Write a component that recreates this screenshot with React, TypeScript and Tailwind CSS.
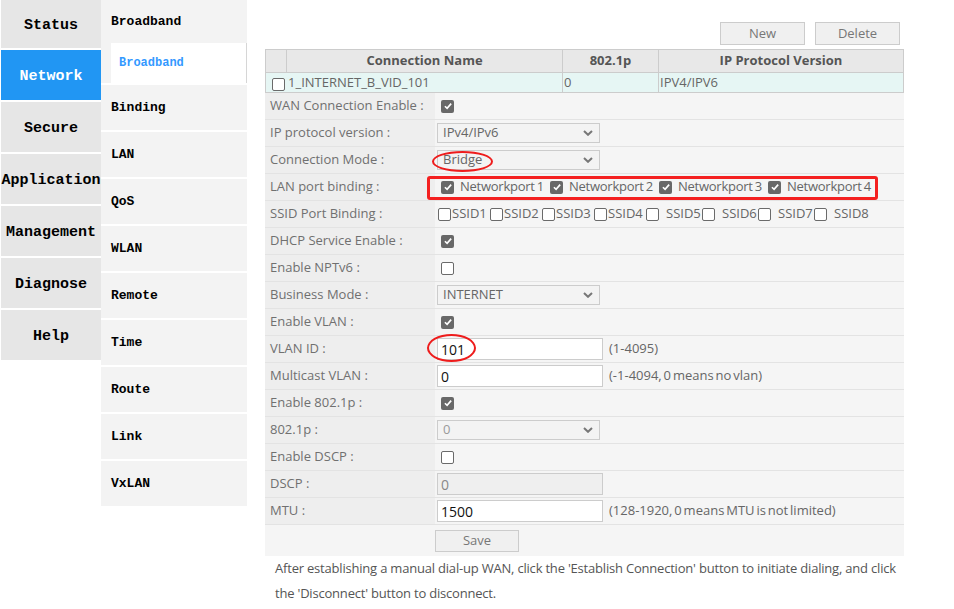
import React from 'react';

const mainMenu = ['Status', 'Network', 'Secure', 'Application', 'Management', 'Diagnose', 'Help'];
const subMenu = ['Binding', 'LAN', 'QoS', 'WLAN', 'Remote', 'Time', 'Route', 'Link', 'VxLAN'];

function Box({ on }: { on?: boolean }) {
  if (on) {
    return (
      <span className="inline-flex h-[13px] w-[13px] shrink-0 items-center justify-center rounded-[2px] bg-[#686868]">
        <svg viewBox="0 0 12 12" className="h-[10px] w-[10px]">
          <path d="M2.3 6.3 4.9 8.8 9.8 3.2" fill="none" stroke="#fff" strokeWidth="2" />
        </svg>
      </span>
    );
  }
  return <span className="inline-block h-[13px] w-[13px] shrink-0 rounded-[2px] border border-[#6a6a6a] bg-white" />;
}

function Select({ value, dim }: { value: string; dim?: boolean }) {
  return (
    <div className="flex h-[20px] w-[163px] items-center justify-between border border-[#cccccc] bg-[#f3f3f3] pl-[5px] pr-[6px]">
      <span className={dim ? 'text-[#9a9a9a]' : 'text-[#666]'}>{value}</span>
      <svg viewBox="0 0 10 6" className="h-[6px] w-[10px]">
        <path d="M1 1 5 4.8 9 1" fill="none" stroke="#777" strokeWidth="2" />
      </svg>
    </div>
  );
}

function Input({ value, disabled }: { value: string; disabled?: boolean }) {
  return (
    <div
      className={`flex h-[22px] w-[166px] items-center border border-[#cccccc] pl-[3px] text-[14px] ${
        disabled ? 'bg-[#efefef] text-[#888]' : 'bg-white text-[#111]'
      }`}
    >
      {value}
    </div>
  );
}

function Hint({ children }: { children: React.ReactNode }) {
  return <span className="ml-[6px] text-[#666] [word-spacing:-1.5px]">{children}</span>;
}

function Row({ label, children, pl = 'pl-[2px]' }: { label: string; children: React.ReactNode; pl?: string }) {
  return (
    <div className="flex h-[27px] border-b border-[#e3e3e3]">
      <div className="flex w-[170px] items-center bg-[#eeeeee] pl-[5px] text-[#707070]">{label}</div>
      <div className={`relative flex flex-1 items-center bg-[#f5f5f5] ${pl}`}>{children}</div>
    </div>
  );
}

export default function App() {
  return (
    <div className="flex h-[609px] w-[954px] overflow-hidden bg-white font-['Open_Sans',sans-serif] text-[13px]">
      {/* main menu */}
      <div className="ml-[1px] flex w-[100px] flex-col gap-[2px] font-['Liberation_Mono',monospace] text-[15px] font-bold">
        {mainMenu.map((m, i) => (
          <div
            key={m}
            className={`flex items-center justify-center pt-[4px] ${i === 0 ? 'h-[48px]' : 'h-[50px]'} ${
              m === 'Network' ? 'bg-[#2196f3] text-white' : 'bg-[#e6e6e6] text-black'
            }`}
          >
            {m}
          </div>
        ))}
      </div>

      {/* sub menu */}
      <div className="flex w-[146px] flex-col gap-[2px] font-['Liberation_Mono',monospace] font-bold">
        <div className="bg-[#f3f3f3]">
          <div className="flex h-[43px] items-center pl-[10px] text-[13px] text-black">Broadband</div>
          <div className="ml-[10px] flex h-[40px] items-center border-r border-[#d6d6d6] bg-white pl-[8px] text-[12px] text-[#3399ff]">
            Broadband
          </div>
        </div>
        {subMenu.map((s) => (
          <div key={s} className="flex h-[45px] items-center bg-[#f3f3f3] pl-[10px] pt-[1px] text-[13px] text-black">
            {s}
          </div>
        ))}
      </div>

      {/* content */}
      <div className="ml-[18px] w-[639px] pt-[22px]">
        <div className="flex h-[23px] justify-end gap-[10px] pr-[4px]">
          <button className="h-[23px] w-[85px] border border-[#cccccc] bg-[#f0f0f0] text-[13px] text-[#777]">New</button>
          <button className="h-[23px] w-[85px] border border-[#cccccc] bg-[#f0f0f0] text-[13px] text-[#777]">Delete</button>
        </div>

        <div className="mt-[4px] border border-[#cccccc]">
          <div className="flex h-[22px] bg-[#e8e8e8] font-bold text-[#555]">
            <div className="w-[21px] border-r border-[#cccccc]" />
            <div className="flex w-[276px] items-center justify-center border-r border-[#cccccc]">Connection Name</div>
            <div className="flex w-[96px] items-center justify-center border-r border-[#cccccc]">802.1p</div>
            <div className="flex flex-1 items-center justify-center">IP Protocol Version</div>
          </div>
          <div className="flex h-[20px] border-t border-[#cccccc] bg-[#e6f6f4] text-[#666]">
            <div className="flex w-[21px] items-end justify-center pb-[1px] pl-[3px]">
              <Box />
            </div>
            <div className="flex w-[276px] items-center border-r border-[#cccccc] pl-[1px]">1_INTERNET_B_VID_101</div>
            <div className="flex w-[96px] items-center border-r border-[#cccccc] pl-[1px]">0</div>
            <div className="flex flex-1 items-center pl-[1px]">IPV4/IPV6</div>
          </div>
        </div>

        <Row label="WAN Connection Enable :" pl="pl-[6px]">
          <Box on />
        </Row>
        <Row label="IP protocol version :">
          <Select value="IPv4/IPv6" />
        </Row>
        <Row label="Connection Mode :">
          <Select value="Bridge" />
          <span className="absolute left-[-3px] top-[4px] h-[21px] w-[61px] rounded-[50%] border-2 border-[#ee1c1c]" />
        </Row>
        <Row label="LAN port binding :" pl="pl-[6px]">
          {[1, 2, 3, 4].map((n) => (
            <div key={n} className="flex w-[109px] items-center">
              <Box on />
              <span className="ml-[6px] tracking-[-0.25px] text-[#666] [word-spacing:-1px]">Networkport {n}</span>
            </div>
          ))}
          <span className="absolute left-[-8px] top-[2px] h-[24px] w-[451px] rounded-[3px] border-[3px] border-[#f42020]" />
        </Row>
        <Row label="SSID Port Binding :" pl="pl-[3px]">
          {[1, 2, 3, 4, 5, 6, 7, 8].map((n) => (
            <div key={n} className={`flex items-center ${n <= 4 ? 'w-[52px]' : 'w-[56px]'}`}>
              <Box />
              <span className={`${n <= 4 ? 'ml-[1px]' : 'ml-[7px]'} text-[#666]`}>SSID{n}</span>
            </div>
          ))}
        </Row>
        <Row label="DHCP Service Enable :" pl="pl-[6px]">
          <Box on />
        </Row>
        <Row label="Enable NPTv6 :" pl="pl-[6px]">
          <Box />
        </Row>
        <Row label="Business Mode :">
          <Select value="INTERNET" />
        </Row>
        <Row label="Enable VLAN :" pl="pl-[6px]">
          <Box on />
        </Row>
        <Row label="VLAN ID :">
          <Input value="101" />
          <Hint>(1-4095)</Hint>
          <span className="absolute left-[-8px] top-[-2px] h-[28px] w-[49px] rounded-[50%] border-2 border-[#ee1c1c]" />
        </Row>
        <Row label="Multicast VLAN :">
          <Input value="0" />
          <Hint>(-1-4094, 0 means no vlan)</Hint>
        </Row>
        <Row label="Enable 802.1p :" pl="pl-[6px]">
          <Box on />
        </Row>
        <Row label="802.1p :">
          <Select value="0" dim />
        </Row>
        <Row label="Enable DSCP :" pl="pl-[6px]">
          <Box />
        </Row>
        <Row label="DSCP :">
          <Input value="0" disabled />
        </Row>
        <Row label="MTU :">
          <Input value="1500" />
          <Hint>(128-1920, 0 means MTU is not limited)</Hint>
        </Row>

        <div className="h-[31px] bg-[#f5f5f5] pl-[170px] pt-[5px]">
          <button className="h-[22px] w-[84px] border border-[#cccccc] bg-[#f0f0f0] text-[13px] text-[#777]">Save</button>
        </div>

        <p className="px-[10px] text-[13px] leading-[25px] tracking-[-0.2px] text-[#555]">
          <span className="whitespace-nowrap">
            After establishing a manual dial-up WAN, click the 'Establish Connection' button to initiate dialing, and click
          </span>
          <br />
          the 'Disconnect' button to disconnect.
        </p>
      </div>
    </div>
  );
}
